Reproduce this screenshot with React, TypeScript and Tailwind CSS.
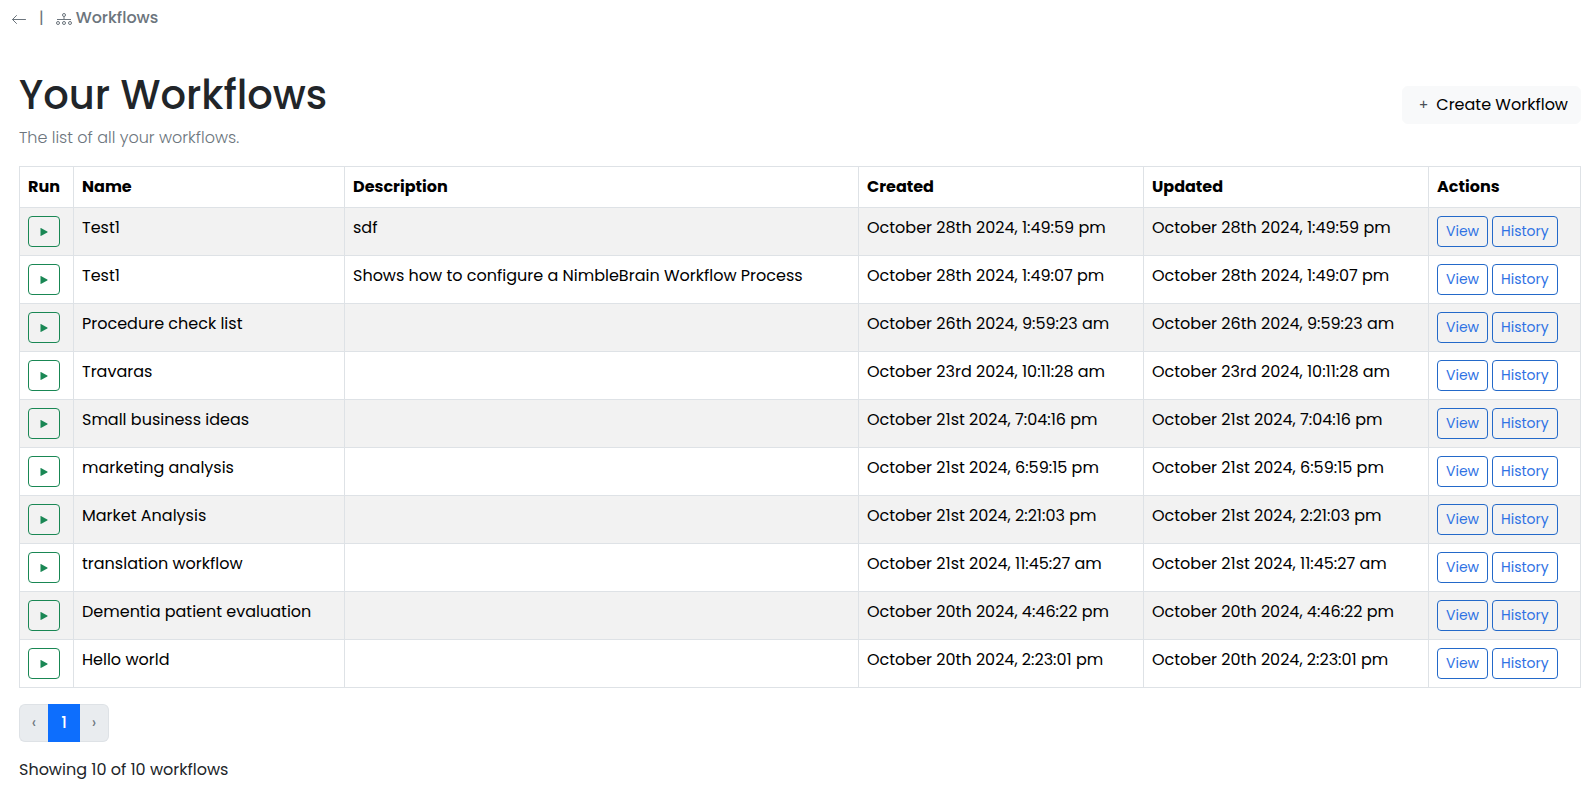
type Workflow = {
  id: number;
  name: string;
  description: string;
  created: string;
  updated: string;
};

const workflows: Workflow[] = [
  ["Test1", "sdf", "October 28th 2024, 1:49:59 pm"],
  ["Test1", "Shows how to configure a NimbleBrain Workflow Process", "October 28th 2024, 1:49:07 pm"],
  ["Procedure check list", "", "October 26th 2024, 9:59:23 am"],
  ["Travaras", "", "October 23rd 2024, 10:11:28 am"],
  ["Small business ideas", "", "October 21st 2024, 7:04:16 pm"],
  ["marketing analysis", "", "October 21st 2024, 6:59:15 pm"],
  ["Market Analysis", "", "October 21st 2024, 2:21:03 pm"],
  ["translation workflow", "", "October 21st 2024, 11:45:27 am"],
  ["Dementia patient evaluation", "", "October 20th 2024, 4:46:22 pm"],
  ["Hello world", "", "October 20th 2024, 2:23:01 pm"],
].map(([name, description, date], id) => ({ id, name, description, created: date, updated: date }));

function ArrowLeftIcon() {
  return (
    <svg className="h-4 w-4" viewBox="0 0 16 16" fill="none" stroke="currentColor" strokeLinecap="round" strokeLinejoin="round" aria-hidden="true">
      <path d="M14.5 9.5H1.5M5.5 5.5l-4 4 4 4" />
    </svg>
  );
}

function HierarchyIcon() {
  return (
    <svg className="h-4 w-4" viewBox="0 0 16 16" fill="none" stroke="currentColor" aria-hidden="true">
      <circle cx="8" cy="5" r="1.5" />
      <circle cx="2" cy="13" r="1.5" />
      <circle cx="8" cy="13" r="1.5" />
      <circle cx="14" cy="13" r="1.5" />
      <path d="M8 6.5v3M1 9.5h14" />
    </svg>
  );
}

function PlayIcon() {
  return (
    <svg className="h-2 w-2" viewBox="0 0 8 8" fill="currentColor" aria-hidden="true">
      <path d="M.5.6C.5.1.9 0 1.3.2l6 3.3c.4.3.4.7 0 1l-6 3.3C.9 8 .5 7.9.5 7.4z" />
    </svg>
  );
}

function WorkflowRow({ workflow }: { workflow: Workflow }) {
  const cell = "border border-[#dee2e6] p-2";
  const action = "h-[31px] rounded border border-[#2369c9] px-2 pb-0.5 text-sm text-[#2f72e4]";
  return (
    <tr className="align-top odd:bg-[#f2f2f2]">
      <td className={cell}>
        <button
          type="button"
          aria-label={`Run ${workflow.name}`}
          className="flex h-[31px] w-8 items-center justify-center rounded border border-[#198754] text-[#198754]"
        >
          <PlayIcon />
        </button>
      </td>
      <td className={cell}>{workflow.name}</td>
      <td className={cell}>{workflow.description}</td>
      <td className={cell}>{workflow.created}</td>
      <td className={cell}>{workflow.updated}</td>
      <td className={cell}>
        <div className="flex gap-1">
          <button type="button" className={action}>View</button>
          <button type="button" className={action}>History</button>
        </div>
      </td>
    </tr>
  );
}

export default function App() {
  const heading = "border border-[#dee2e6] p-2 font-bold";
  return (
    <div className="min-h-screen bg-white font-['Poppins','Inter',sans-serif] text-base text-[#212529]">
      <nav aria-label="Breadcrumb" className="flex h-9 items-center px-[11px] text-[#6c757d]">
        <a href="#back" aria-label="Back"><ArrowLeftIcon /></a>
        <span className="ml-3 leading-6">|</span>
        <a href="#workflows" className="ml-3 flex items-center gap-1 font-medium leading-6">
          <HierarchyIcon />
          Workflows
        </a>
      </nav>

      <main className="pl-[19px] pr-[3px] pt-[35px]">
        <header className="flex items-center justify-between">
          <div>
            <h1 className="text-[40px] font-medium leading-12">Your Workflows</h1>
            <p className="mt-[7px] font-light leading-6 text-[#6c757d]">The list of all your workflows.</p>
          </div>
          <button type="button" className="mb-3 flex h-[38px] items-center rounded-md border border-[#f8f9fa] bg-[#f8f9fa] px-3 text-black">
            <span className="mr-2 ml-1 text-sm text-[#495057]">+</span>
            Create Workflow
          </button>
        </header>

        <table className="mt-4 w-full table-fixed border-collapse text-left leading-6 text-black">
          <colgroup>
            <col className="w-[54px]" />
            <col className="w-[271px]" />
            <col />
            <col className="w-[285px]" />
            <col className="w-[285px]" />
            <col className="w-[152px]" />
          </colgroup>
          <thead>
            <tr>
              <th scope="col" className={heading}>Run</th>
              <th scope="col" className={heading}>Name</th>
              <th scope="col" className={heading}>Description</th>
              <th scope="col" className={heading}>Created</th>
              <th scope="col" className={heading}>Updated</th>
              <th scope="col" className={heading}>Actions</th>
            </tr>
          </thead>
          <tbody>
            {workflows.map((workflow) => (
              <WorkflowRow key={workflow.id} workflow={workflow} />
            ))}
          </tbody>
        </table>

        <nav aria-label="Pagination" className="mt-4 flex h-[38px] text-[#6c757d]">
          <button type="button" disabled aria-label="Previous page" className="w-[29px] rounded-l-md border border-r-0 border-[#dee2e6] bg-[#e9ecef]">
            ‹
          </button>
          <button type="button" aria-current="page" className="w-8 bg-[#0d6efd] font-medium text-white">1</button>
          <button type="button" disabled aria-label="Next page" className="w-[29px] rounded-r-md border border-l-0 border-[#dee2e6] bg-[#e9ecef]">
            ›
          </button>
        </nav>
        <p className="mt-4 leading-6">Showing {workflows.length} of {workflows.length} workflows</p>
      </main>
    </div>
  );
}
